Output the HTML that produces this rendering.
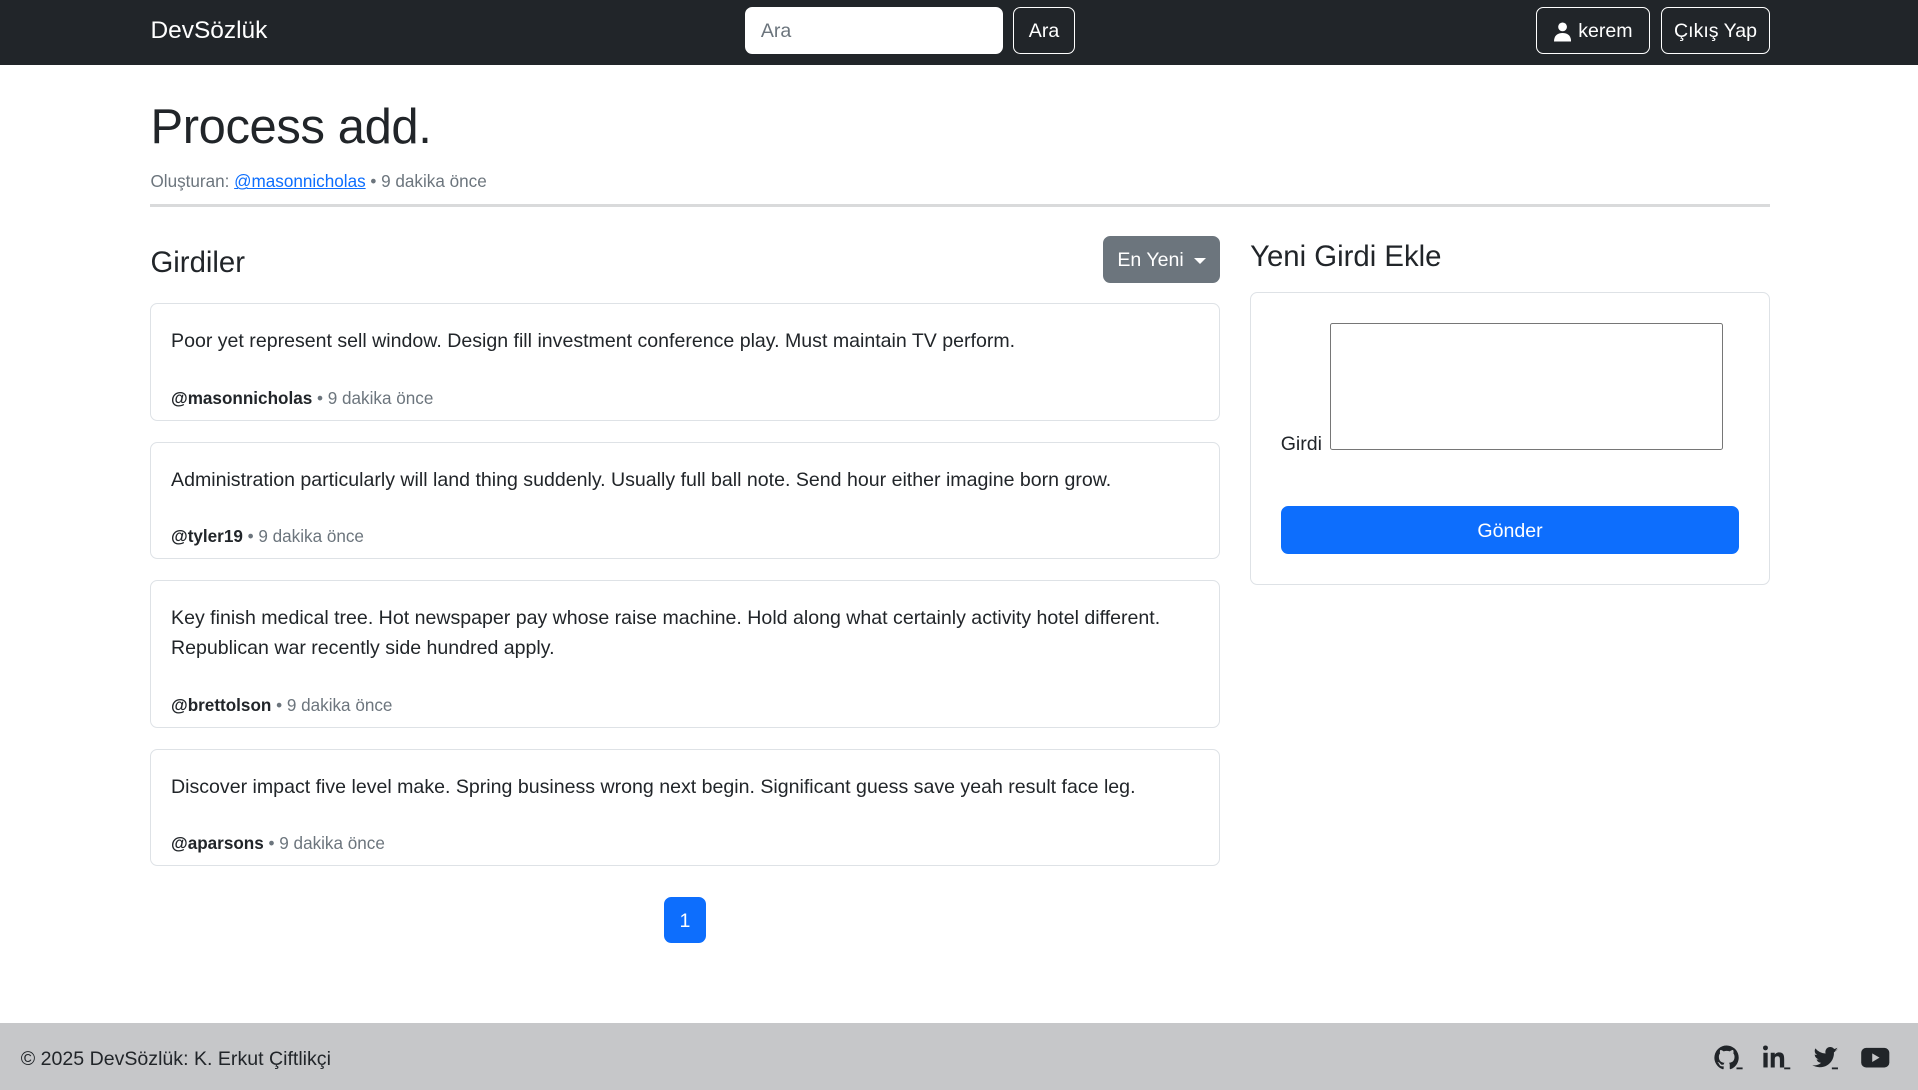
<!DOCTYPE html>
<html><head><meta charset="utf-8"><style>
html{zoom:1.22321}
*{box-sizing:border-box}
body{margin:0;width:1568px;height:891px;position:relative;font-family:"Liberation Sans",sans-serif;color:#212529;background:#fff;overflow:hidden}
.abs{position:absolute}
.nav{left:0;top:0;width:1568px;height:53px;background:#212529}
.btn-o{position:absolute;border:1px solid #fff;border-radius:6px;color:#fff;font-size:16px;display:flex;align-items:center;justify-content:center;gap:6px;padding-top:2px}
.card{position:absolute;left:123px;width:874px;border:1px solid #dee2e6;border-radius:6px;padding:18px 16px;font-size:16px;line-height:25px}
.card .m{margin-top:22px;font-size:14px;color:#6c757d}
.card .m b{color:#212529}
</style></head><body>
<div class="abs nav"></div>
<div class="abs" style="left:123px;top:14px;color:#fff;font-size:20px">DevSözlük</div>
<div class="abs" style="left:609px;top:6px;width:211px;height:38px;background:#fff;border-radius:6px;padding:10px 13px;font-size:16px;color:#6c757d">Ara</div>
<div class="btn-o" style="left:828px;top:6px;width:51px;height:38px">Ara</div>
<div class="btn-o" style="left:1256px;top:6px;width:93px;height:38px"><svg width="14" height="16" viewBox="0 0 14 16"><circle cx="7" cy="4" r="3.6" fill="#fff"/><path d="M0 16c0-5 3-7 7-7s7 2 7 7z" fill="#fff"/></svg>kerem</div>
<div class="btn-o" style="left:1358px;top:6px;width:89px;height:38px">Çıkış Yap</div>
<div class="abs" style="left:123px;top:81px;font-size:40px;font-weight:500;letter-spacing:-0.3px">Process add.</div>
<div class="abs" style="left:123px;top:141px;font-size:14px;color:#6c757d">Oluşturan: <span style="color:#0d6efd;text-decoration:underline">@masonnicholas</span> • 9 dakika önce</div>
<div class="abs" style="left:123px;top:167px;width:1324px;height:2px;background:#d9dadb"></div>
<div class="abs" style="left:123px;top:201px;font-size:24px;font-weight:500">Girdiler</div>
<div class="abs" style="left:902px;top:193px;width:95px;height:38px;background:#6c757d;border-radius:6px;color:#fff;font-size:16px;display:flex;align-items:center;justify-content:center;gap:8px;padding-top:2px">En Yeni <span style="border-top:5px solid #fff;border-left:5px solid transparent;border-right:5px solid transparent"></span></div>
<div class="card" style="top:248px;height:96px">Poor yet represent sell window. Design fill investment conference play. Must maintain TV perform.<div class="m"><b>@masonnicholas</b> • 9 dakika önce</div></div>
<div class="card" style="top:361px;height:96px">Administration particularly will land thing suddenly. Usually full ball note. Send hour either imagine born grow.<div class="m"><b>@tyler19</b> • 9 dakika önce</div></div>
<div class="card" style="top:474px;height:121px">Key finish medical tree. Hot newspaper pay whose raise machine. Hold along what certainly activity hotel different. Republican war recently side hundred apply.<div class="m"><b>@brettolson</b> • 9 dakika önce</div></div>
<div class="card" style="top:612px;height:96px">Discover impact five level make. Spring business wrong next begin. Significant guess save yeah result face leg.<div class="m"><b>@aparsons</b> • 9 dakika önce</div></div>
<div class="abs" style="left:543px;top:733px;width:34px;height:38px;background:#0d6efd;border-radius:6px;color:#fff;font-size:16px;display:flex;align-items:center;justify-content:center;padding-top:2px">1</div>
<div class="abs" style="left:1022px;top:196px;font-size:24px;font-weight:500">Yeni Girdi Ekle</div>
<div class="abs" style="left:1022px;top:239px;width:425px;height:239px;border:1px solid #dee2e6;border-radius:6px"></div>
<div class="abs" style="left:1047px;top:354px;font-size:16px">Girdi</div>
<div class="abs" style="left:1087px;top:264px;width:322px;height:104px;border:1px solid #767676;border-radius:2px"></div>
<div class="abs" style="left:1047px;top:414px;width:375px;height:39px;background:#0d6efd;border-radius:6px;color:#fff;font-size:16px;display:flex;align-items:center;justify-content:center;padding-top:2px">Gönder</div>
<div class="abs" style="left:0;top:836px;width:1568px;height:55px;background:#c6c7c9"></div>
<div class="abs" style="left:17px;top:857px;font-size:16px">© 2025 DevSözlük: K. Erkut Çiftlikçi</div>
<svg class="abs" style="left:1400px;top:853px" width="150" height="24" viewBox="0 0 150 24" fill="#212529">
<path d="M12 2a10 10 0 0 0-3.2 19.5c.5.1.7-.2.7-.5v-2c-2.8.6-3.4-1.2-3.4-1.2-.5-1.2-1.1-1.5-1.1-1.5-.9-.6.1-.6.1-.6 1 .1 1.5 1 1.5 1 .9 1.6 2.4 1.1 3 .9.1-.7.4-1.1.6-1.4-2.2-.3-4.6-1.1-4.6-5 0-1.1.4-2 1-2.7-.1-.3-.4-1.3.1-2.7 0 0 .8-.3 2.8 1a9.5 9.5 0 0 1 5 0c1.9-1.3 2.8-1 2.8-1 .5 1.4.2 2.4.1 2.7.6.7 1 1.6 1 2.7 0 3.900-2.3 4.700-4.600 5 .4.3.7.9.7 1.9v2.8c0 .3.2.6.7.5A10 10 0 0 0 12 2z"/>
<rect x="20" y="20" width="5" height="1.5"/>
<rect x="42" y="8" width="3.5" height="12"/><circle cx="43.7" cy="4" r="2"/><path d="M48 8h3.3v1.6c.5-.9 1.7-1.9 3.5-1.9 3.6 0 4.2 2.3 4.2 5.4V20h-3.5v-6c0-1.4 0-3.2-2-3.2s-2.2 1.5-2.2 3.1V20H48z"/><rect x="59" y="20" width="5" height="1.5"/>
<path d="M103 5.5c-.7.3-1.5.5-2.3.6.8-.5 1.5-1.3 1.8-2.2-.8.5-1.7.8-2.6 1a4 4 0 0 0-7 3.7 11.5 11.5 0 0 1-8.4-4.2 4 4 0 0 0 1.3 5.4c-.7 0-1.3-.2-1.8-.5 0 2 1.4 3.600 3.300 4-.6.2-1.2.2-1.8.1.5 1.6 2 2.8 3.8 2.8A8.2 8.2 0 0 1 82 18a11.5 11.5 0 0 0 17.7-10.3c.8-.6 1.5-1.3 2-2.1z"/><rect x="98" y="20" width="5" height="1.5"/>
<rect x="122" y="4" width="23" height="16" rx="4"/><path d="M131 8.5v7l6-3.5z" fill="#c6c7c9"/>
</svg>
</body></html>
